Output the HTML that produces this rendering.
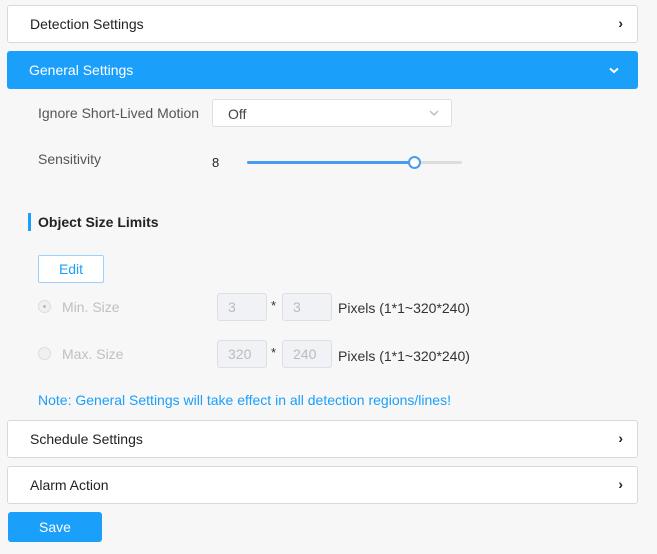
<!DOCTYPE html>
<html><head><meta charset="utf-8"><style>
body{margin:0;width:657px;height:554px;background:#f7f7f7;font-family:"Liberation Sans",sans-serif;font-size:14px;color:#333;position:relative;overflow:hidden}
.a{position:absolute}
.panel{position:absolute;left:7px;width:629px;height:36px;background:#fff;border:1px solid #d9d9d9;border-radius:3px}
.panel span{position:absolute;left:22px;top:10px;color:#222}
.chev{position:absolute;right:14px;top:9px;font-weight:bold;font-size:14px;color:#222}
.inp{position:absolute;width:48px;height:26px;background:#f0f2f5;border:1px solid #dcdfe6;border-radius:3px;color:#bbb;font-size:14px;line-height:26px;padding-left:10px;box-sizing:border-box}
</style></head><body>
<div class="panel" style="top:5px"><span>Detection Settings</span><div class="chev">›</div></div>
<div class="a" style="left:7px;top:51px;width:631px;height:38px;background:#1a9ffb;border-radius:3px">
<span class="a" style="left:22px;top:11px;color:#fff">General Settings</span>
<svg class="a" style="left:602px;top:16px" width="10" height="7"><path d="M1 1.5L5 5L9 1.5" stroke="#fff" stroke-width="2" fill="none"/></svg></div>
<div class="a" style="left:38px;top:105px;color:#555">Ignore Short-Lived Motion</div>
<div class="a" style="left:212px;top:99px;width:240px;height:28px;box-sizing:border-box;background:#fff;border:1px solid #dcdfe6;border-radius:3px">
<span class="a" style="left:15px;top:6px;color:#444">Off</span>
<svg class="a" style="left:216px;top:10px" width="10" height="6"><path d="M1 1L5 5L9 1" stroke="#bbb" stroke-width="1.3" fill="none"/></svg></div>
<div class="a" style="left:38px;top:151px;color:#555">Sensitivity</div>
<div class="a" style="left:212px;top:155px;color:#222;font-size:13px">8</div>
<div class="a" style="left:247px;top:161px;width:215px;height:3px;background:#ddd;border-radius:2px"></div>
<div class="a" style="left:247px;top:161px;width:167px;height:3px;background:#4a9bf0;border-radius:2px"></div>
<div class="a" style="left:408px;top:156px;width:9px;height:9px;border:2px solid #4a9bf0;background:#fff;border-radius:50%"></div>
<div class="a" style="left:28px;top:213px;width:3px;height:18px;background:#1a9ffb"></div>
<div class="a" style="left:38px;top:214px;font-weight:bold;color:#222;font-size:14px">Object Size Limits</div>
<div class="a" style="left:38px;top:255px;width:66px;height:28px;box-sizing:border-box;border:1px solid #9fd0fb;background:#fff;border-radius:2px;color:#1a9ffb;text-align:center;line-height:26px">Edit</div>
<div class="a" style="left:38px;top:300px;width:13px;height:13px;box-sizing:border-box;border:1px solid #ddd;border-radius:50%;background:#f0f0f0"><div class="a" style="left:4px;top:4px;width:3px;height:3px;background:#bbb;border-radius:50%"></div></div>
<div class="a" style="left:62px;top:299px;color:#c0c0c0">Min. Size</div>
<div class="inp" style="left:217px;top:293px;height:28px;width:50px">3</div>
<div class="a" style="left:271px;top:298px;font-size:13px">*</div>
<div class="inp" style="left:282px;top:293px;height:28px;width:50px">3</div>
<div class="a" style="left:338px;top:300px;color:#333">Pixels (1*1~320*240)</div>
<div class="a" style="left:38px;top:347px;width:13px;height:13px;box-sizing:border-box;border:1px solid #ddd;border-radius:50%;background:#f0f0f0"></div>
<div class="a" style="left:62px;top:346px;color:#c0c0c0">Max. Size</div>
<div class="inp" style="left:217px;top:340px;height:28px;width:50px">320</div>
<div class="a" style="left:271px;top:345px;font-size:13px">*</div>
<div class="inp" style="left:282px;top:340px;height:28px;width:50px">240</div>
<div class="a" style="left:338px;top:348px;color:#333">Pixels (1*1~320*240)</div>
<div class="a" style="left:38px;top:392px;color:#1a9ffb">Note: General Settings will take effect in all detection regions/lines!</div>
<div class="panel" style="top:420px"><span>Schedule Settings</span><div class="chev">›</div></div>
<div class="panel" style="top:466px"><span>Alarm Action</span><div class="chev">›</div></div>
<div class="a" style="left:8px;top:512px;width:94px;height:30px;background:#1a9ffb;border-radius:3px;color:#fff;text-align:center;line-height:30px">Save</div>
</body></html>
